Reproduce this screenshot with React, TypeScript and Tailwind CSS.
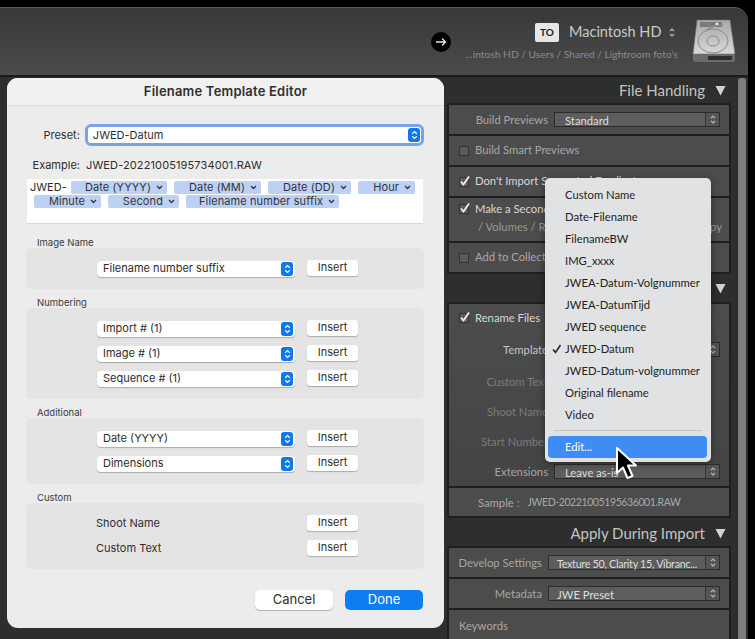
import React from "react";

const macFont = "font-['Inter','Liberation_Sans',sans-serif]";
const lrFont = "font-['Lato','Open_Sans',sans-serif]";

const menuItems = [
  "Custom Name",
  "Date-Filename",
  "FilenameBW",
  "IMG_xxxx",
  "JWEA-Datum-Volgnummer",
  "JWEA-DatumTijd",
  "JWED sequence",
  "JWED-Datum",
  "JWED-Datum-volgnummer",
  "Original filename",
  "Video",
];

const Triangle = () => (
  <svg width="11" height="11" viewBox="0 0 11 11" className="shrink-0">
    <path d="M0.5 1H10.5L5.5 10.5Z" fill="#d2d2d2" />
  </svg>
);

const LrStepper = () => (
  <svg width="6" height="11" viewBox="0 0 6 11">
    <path d="M1 4L3 2L5 4M1 7L3 9L5 7" fill="none" stroke="#b5b5b5" strokeWidth="1.2" />
  </svg>
);

const LrSelect = ({ text, w, pad = "pl-[10px]", size = "text-[11.25px]" }: { text?: string; w: string; pad?: string; size?: string }) => (
  <div className={`flex h-[15px] items-stretch border border-[#2c2c2c] bg-[#5d5d5d] ${w}`}>
    <div className={`flex-1 whitespace-nowrap leading-[15px] text-[#dedede] ${size} ${pad}`}>{text}</div>
    <div className="flex w-[14px] items-center justify-center border-l border-[#363636] bg-[#555555]">
      <LrStepper />
    </div>
  </div>
);

const Check = ({ on }: { on: boolean }) => (
  <div className="relative h-[10px] w-[10px] shrink-0 border border-[#333333] bg-[#5a5a5a]">
    {on && (
      <svg width="12" height="12" viewBox="0 0 12 12" className="absolute -left-px -top-[3px]">
        <path d="M2 6.5L4.5 9.5L10 1.5" fill="none" stroke="#f0f0f0" strokeWidth="1.8" />
      </svg>
    )}
  </div>
);

const SectionHead = ({ title, h }: { title?: string; h: string }) => (
  <div className={`flex shrink-0 items-center justify-end gap-[10px] pr-[5px] text-[15px] text-[#c4c4c4] ${h}`}>
    <span>{title}</span>
    <Triangle />
  </div>
);

const CheckRow = ({ label, on, h, bright }: { label: string; on: boolean; h: string; bright?: boolean }) => (
  <div className={`flex items-center gap-[6px] bg-[#4c4c4c] pl-[10px] ${h}`}>
    <Check on={on} />
    <span className={`whitespace-nowrap text-[11.25px] ${bright ? "text-[#d8d8d8]" : "text-[#a8a8a8]"}`}>{label}</span>
  </div>
);

const FieldRow = ({ label, children, h = "h-[30px]", labelW = "w-[99px]", color = "text-[#a6a6a6]" }: {
  label: string;
  children?: React.ReactNode;
  h?: string;
  labelW?: string;
  color?: string;
}) => (
  <div className={`flex items-center ${h}`}>
    <div className={`shrink-0 pt-[2px] text-right text-[11.25px] ${color} ${labelW}`}>{label}</div>
    <div className="ml-[6px]">{children}</div>
  </div>
);

const BlueStepper = () => (
  <div className="flex h-[14px] w-[12px] shrink-0 items-center justify-center rounded-[3px] bg-[#0f78ee]">
    <svg width="7" height="10" viewBox="0 0 7 10">
      <path d="M1.2 3.8L3.5 1.6L5.8 3.8M1.2 6.2L3.5 8.4L5.8 6.2" fill="none" stroke="#ffffff" strokeWidth="1.2" />
    </svg>
  </div>
);

const Chip = ({ text, w }: { text: string; w: string }) => (
  <div className={`flex h-[13px] items-center justify-end gap-[5px] rounded-[2px] bg-[#bdd1f6] pr-[4px] text-[11px] tracking-[0.1px] text-[#333333] ${w}`}>
    <span>{text}</span>
    <svg width="7" height="5" viewBox="0 0 7 5">
      <path d="M1 1L3.5 3.5L6 1" fill="none" stroke="#333333" strokeWidth="1.3" />
    </svg>
  </div>
);

const Insert = () => (
  <button className="mb-[2px] flex h-[16px] w-[51px] items-center justify-center rounded-[3px] bg-white text-[11px] text-[#2e2e2e] shadow-[0_1px_1px_rgba(0,0,0,0.25)]">
    Insert
  </button>
);

const TemplateRow = ({ text }: { text: string }) => (
  <div className="flex h-[25px] items-center pl-[71px]">
    <div className="flex h-[16px] w-[198px] items-center justify-between rounded-[4px] bg-white pl-[6px] pr-[2px] text-[11px] text-[#2e2e2e] shadow-[0_1px_1px_rgba(0,0,0,0.25)]">
      <span>{text}</span>
      <BlueStepper />
    </div>
    <div className="ml-[12px] flex">
      <Insert />
    </div>
  </div>
);

const TextRow = ({ text }: { text: string }) => (
  <div className="flex h-[25px] items-center pl-[70px]">
    <span className="w-[211px] text-[11px] text-[#2e2e2e]">{text}</span>
    <Insert />
  </div>
);

const Group = ({ title, h, mt, children }: { title: string; h: string; mt: string; children: React.ReactNode }) => (
  <div className={mt}>
    <div className="pl-[11px] pt-[1px] text-[9.5px] leading-[11px] text-[#3a3a3a]">{title}</div>
    <div className={`flex flex-col justify-center rounded-[5px] bg-[#e4e4e4] ${h}`}>{children}</div>
  </div>
);

const Dialog = () => (
  <div className={`absolute left-[7px] top-[78px] flex h-[550px] w-[437px] flex-col rounded-[11px] bg-[#ececec] ${macFont}`}>
    <div className="flex h-[28px] shrink-0 items-center justify-center rounded-t-[11px] border-b border-[#dcdcdc] bg-[#f1f1f1] text-[13px] font-semibold tracking-[0.2px] text-[#2f2f2f]">
      Filename Template Editor
    </div>
    <div className="flex flex-1 flex-col pl-[19px] pr-[20px]">
      <div className="mt-[18px] flex items-center">
        <span className="w-[54px] text-right text-[11px] text-[#2e2e2e]">Preset:</span>
        <div className="ml-[5px] flex h-[22px] w-[340px] items-center justify-between rounded-[6px] border-[3px] border-[#7f9fe6] bg-white pl-[5px] pr-[1px] text-[11px] text-[#2e2e2e]">
          <span>JWED-Datum</span>
          <BlueStepper />
        </div>
      </div>
      <div className="mt-[12px] flex h-[14px] items-center text-[11px] text-[#2e2e2e]">
        <span className="w-[54px] text-right">Example:</span>
        <span className="ml-[6px] tracking-[0.12px]">JWED-20221005195734001.RAW</span>
      </div>
      <div className="ml-[1px] mt-[7px] h-[45px] w-[396px] border-b border-[#d8d8d8] bg-white pt-[2px]">
        <div className="flex items-center">
          <span className="ml-[3px] w-[41px] text-[11px] leading-[13px] text-[#2e2e2e]">JWED-</span>
          <div className="flex gap-[7px]">
            <Chip text="Date (YYYY)" w="w-[96px]" />
            <Chip text="Date (MM)" w="w-[87px]" />
            <Chip text="Date (DD)" w="w-[83px]" />
            <Chip text="Hour" w="w-[57px]" />
          </div>
        </div>
        <div className="ml-[7px] mt-[1px] flex gap-[7px]">
          <Chip text="Minute" w="w-[67px]" />
          <Chip text="Second" w="w-[71px]" />
          <Chip text="Filename number suffix" w="w-[153px]" />
        </div>
      </div>
      <Group title="Image Name" h="h-[41px]" mt="mt-[12px]">
        <TemplateRow text="Filename number suffix" />
      </Group>
      <Group title="Numbering" h="h-[91px]" mt="mt-[7px]">
        <TemplateRow text="Import # (1)" />
        <TemplateRow text="Image # (1)" />
        <TemplateRow text="Sequence # (1)" />
      </Group>
      <Group title="Additional" h="h-[66px]" mt="mt-[7px]">
        <TemplateRow text="Date (YYYY)" />
        <TemplateRow text="Dimensions" />
      </Group>
      <Group title="Custom" h="h-[66px]" mt="mt-[7px]">
        <TextRow text="Shoot Name" />
        <TextRow text="Custom Text" />
      </Group>
      <div className="mt-[21px] flex justify-end gap-[12px] pr-[1px]">
        <button className="h-[20px] w-[78px] rounded-[5px] bg-white text-[13px] text-[#2e2e2e] shadow-[0_1px_1px_rgba(0,0,0,0.25)]">
          Cancel
        </button>
        <button className="h-[20px] w-[78px] rounded-[5px] bg-[#0f7df2] text-[13px] text-white">Done</button>
      </div>
    </div>
  </div>
);

const Menu = () => (
  <div className={`absolute left-[545px] top-[178px] h-[284px] w-[166px] rounded-[5px] bg-[#e1e2e3] px-[3px] pt-[6px] shadow-[0_2px_8px_rgba(0,0,0,0.4)] ${lrFont}`}>
    {menuItems.map((item) => (
      <div key={item} className="relative flex h-[22px] items-center whitespace-nowrap pl-[17px] text-[11.25px] text-[#222222]">
        {item === "JWED-Datum" && (
          <svg width="10" height="10" viewBox="0 0 10 10" className="absolute left-[4px] top-[6px]">
            <path d="M1 5.5L3.5 8.5L8.5 1" fill="none" stroke="#222222" strokeWidth="1.5" />
          </svg>
        )}
        {item}
      </div>
    ))}
    <div className="mx-[6px] mt-[4px] h-px bg-[#c6c6c6]" />
    <div className="mt-[5px] flex h-[22px] w-[159px] items-center rounded-[4px] bg-[#3f8df4] pl-[17px] text-[11.25px] text-white">
      Edit...
    </div>
  </div>
);

const Cursor = () => (
  <svg width="26" height="36" viewBox="0 0 26 36" className="absolute left-[614px] top-[446px]">
    <path
      d="M3 2V27L9 21.5L13.5 32L18.5 30L14 19.5H22Z"
      fill="#000000"
      stroke="#ffffff"
      strokeWidth="2"
      strokeLinejoin="round"
    />
  </svg>
);

const DiskIcon = () => (
  <svg width="44" height="46" viewBox="0 0 44 46">
    <defs>
      <linearGradient id="disk" x1="0" y1="0" x2="0" y2="1">
        <stop offset="0" stopColor="#a8a8a8" />
        <stop offset="1" stopColor="#d8d8d8" />
      </linearGradient>
    </defs>
    <path d="M5 1H38L43 35H1Z" fill="url(#disk)" stroke="#6a6a6a" strokeWidth="0.5" />
    <path d="M1 35H43V41Q43 43 41 43H3Q1 43 1 41Z" fill="#6b6b6b" />
    <rect x="16" y="37" width="24" height="4" fill="#2f2f2f" />
    <rect x="8" y="3" width="22" height="5" fill="#7a7a7a" />
    <circle cx="25" cy="5" r="1.5" fill="#f2f2f2" />
    <ellipse cx="21" cy="22" rx="15" ry="12" fill="none" stroke="#8b8b8b" strokeWidth="1" />
    <ellipse cx="21" cy="22" rx="6" ry="5" fill="none" stroke="#8b8b8b" strokeWidth="1" />
    <path d="M14 12Q20 6 31 6" fill="none" stroke="#8b8b8b" strokeWidth="1.5" />
  </svg>
);

const Header = () => (
  <div className={`flex h-[68px] shrink-0 items-center rounded-tr-[14px] border-t border-[#5a5a5a] bg-gradient-to-b from-[#383838] to-[#4b4b4b] ${lrFont}`}>
    <div className="ml-[431px] flex h-[20px] w-[20px] items-center justify-center rounded-full bg-black">
      <svg width="12" height="10" viewBox="0 0 12 10">
        <path d="M1 5H10.5M7 1.5L10.5 5L7 8.5" fill="none" stroke="#e8e8e8" strokeWidth="1.3" />
      </svg>
    </div>
    <div className="ml-[15px] flex w-[212px] flex-col items-end">
      <div className="flex w-full items-center pl-[69px]">
        <div className="flex h-[19px] w-[24px] items-center justify-center rounded-[2px] bg-[#e6e6e6] text-[10px] font-bold text-[#222222]">
          TO
        </div>
        <span className="ml-[10px] whitespace-nowrap text-[14.5px] leading-[20px] text-[#c9c9c9]">Macintosh HD</span>
        <div className="ml-[8px] flex">
          <LrStepper />
        </div>
      </div>
      <div className="mt-[5px] whitespace-nowrap text-[10.25px] leading-[14px] text-[#8b8b8b]">
        ...intosh HD / Users / Shared / Lightroom foto's
      </div>
    </div>
    <div className="ml-[14px]">
      <DiskIcon />
    </div>
  </div>
);

const Sidebar = () => (
  <div className={`ml-[447px] flex min-h-0 flex-1 gap-[7px] ${lrFont}`}>
    <div className="flex w-[284px] flex-col">
      <SectionHead title="File Handling" h="h-[26px]" />
      <div className="flex shrink-0 flex-col gap-[2px] border-2 border-[#1f1f1f] bg-[#1f1f1f]">
        <div className="h-[29px] bg-[#4c4c4c]">
          <FieldRow label="Build Previews" h="h-[29px]">
            <LrSelect text="Standard" w="w-[166px]" />
          </FieldRow>
        </div>
        <CheckRow label="Build Smart Previews" on={false} h="h-[29px]" />
        <CheckRow label="Don't Import Suspected Duplicates" on h="h-[29px]" bright />
        <div className="h-[43px] bg-[#4c4c4c] pl-[10px] pt-[3px]">
          <div className="flex items-center gap-[6px] pr-[17px]">
            <Check on />
            <span className="flex-1 whitespace-nowrap text-[11.25px] text-[#d8d8d8]">Make a Second Copy To :</span>
            <svg width="5" height="8" viewBox="0 0 5 8">
              <path d="M1 7L4 1" fill="none" stroke="#9a9a9a" strokeWidth="1" />
            </svg>
          </div>
          <div className="mt-[1px] flex justify-between pl-[19px] pr-[7px] text-[11.25px] text-[#9a9a9a]">
            <span>/ Volumes / Robert</span>
            <span>Copy</span>
          </div>
        </div>
        <CheckRow label="Add to Collection" on={false} h="h-[29px]" />
      </div>
      <SectionHead h="h-[28px]" />
      <div className="flex shrink-0 flex-col gap-[2px] border-2 border-[#1f1f1f] bg-[#1f1f1f]">
        <div className="h-[182px] bg-gradient-to-b from-[#4c4c4c] to-[#444444]">
          <div className="flex h-[28px] items-center gap-[6px] pl-[10px]">
            <Check on />
            <span className="text-[11.25px] text-[#d8d8d8]">Rename Files</span>
          </div>
          <FieldRow label="Template" h="h-[34px]" color="text-[#c4c4c4]">
            <LrSelect w="w-[166px]" />
          </FieldRow>
          <FieldRow label="Custom Text" color="text-[#7c7c7c]" />
          <FieldRow label="Shoot Name" color="text-[#7c7c7c]" />
          <FieldRow label="Start Number" color="text-[#7c7c7c]" />
          <FieldRow label="Extensions">
            <LrSelect text="Leave as-is" w="w-[166px]" />
          </FieldRow>
        </div>
        <div className="flex h-[28px] items-center whitespace-nowrap bg-[#4c4c4c] pl-[29px] pt-[2px] text-[#a8a8a8]">
          <span className="text-[11.25px]">Sample :</span>
          <span className="ml-[8px] text-[10.5px] tracking-[-0.4px]">JWED-20221005195636001.RAW</span>
        </div>
      </div>
      <SectionHead title="Apply During Import" h="h-[28px] pt-[3px]" />
      <div className="flex shrink-0 flex-col gap-[2px] border-x-2 border-t-2 border-[#1f1f1f] bg-[#1f1f1f]">
        <div className="bg-[#4c4c4c]">
          <FieldRow label="Develop Settings" h="h-[29px]" labelW="w-[93px]">
            <LrSelect text="Texture 50, Clarity 15, Vibranc..." w="w-[172px]" pad="pl-[8px]" size="text-[10.75px] tracking-[-0.3px]" />
          </FieldRow>
        </div>
        <div className="bg-[#4c4c4c]">
          <FieldRow label="Metadata" h="h-[29px]" labelW="w-[93px]">
            <LrSelect text="JWE Preset" w="w-[172px]" pad="pl-[8px]" />
          </FieldRow>
        </div>
        <div className="flex h-[30px] items-center bg-[#4c4c4c] pl-[10px] pt-[2px] text-[11.25px] text-[#a8a8a8]">Keywords</div>
      </div>
    </div>
    <div className="mt-[1px] w-[8px] rounded-t-[3px] bg-[#7d7d7d]" />
  </div>
);

export default function App() {
  return (
    <div className="relative h-[639px] w-[755px] overflow-hidden bg-black">
      <div className="flex h-full flex-col pr-[7px] pt-[7px]">
        <Header />
        <div className="flex min-h-0 flex-1 overflow-hidden border-t-2 border-[#1c1c1c] bg-[#2e2e2e]">
          <Sidebar />
        </div>
      </div>
      <Dialog />
      <Menu />
      <Cursor />
    </div>
  );
}
